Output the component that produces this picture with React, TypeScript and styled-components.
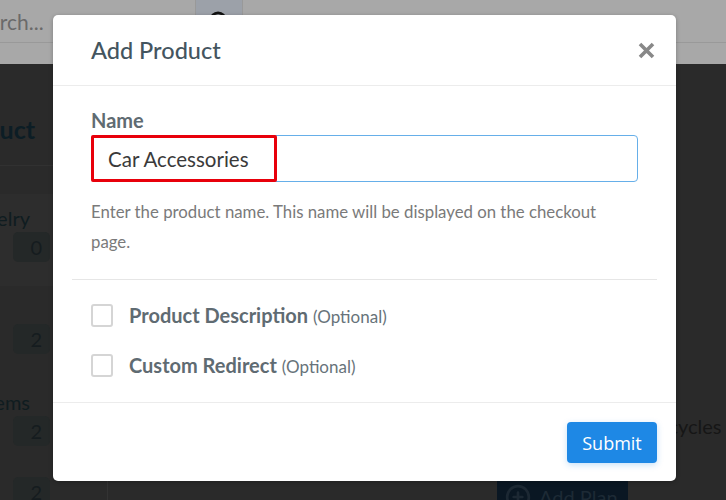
import { Search, PlusCircle } from 'lucide-react';
import styled, { createGlobalStyle } from 'styled-components';

const GlobalStyle = createGlobalStyle`
  html, body {
    margin: 0;
    padding: 0;
    background: #2a2a2a;
    font-family: Lato, "Open Sans", sans-serif;
  }
`;

export default function App() {
  return (
    <>
      <GlobalStyle />
      <Page>
        <Header>
          <SearchRow>
            <SearchField>
              <SearchText>Search...</SearchText>
            </SearchField>
            <SearchButton>
              <Search size={22} strokeWidth={3} color="#111" />
            </SearchButton>
          </SearchRow>
          <SubBar />
        </Header>

        <Main>
          <Sidebar>
            <SideTitle>Product</SideTitle>
            <SideGroup $active>
              <SideName>Jewelry</SideName>
              <Badge>0</Badge>
            </SideGroup>
            <SideGroup>
              <SideName />
              <Badge>2</Badge>
            </SideGroup>
            <SideGroup>
              <SideName>Items</SideName>
              <Badge>2</Badge>
            </SideGroup>
            <SideGroup $compact>
              <Badge>2</Badge>
            </SideGroup>
          </Sidebar>
          <Content>
            <div />
            <PlanColumn>
              <CycleLabel>Billing cycles</CycleLabel>
              <AddPlan>
                <PlusCircle size={26} strokeWidth={2.5} color="#1c2833" />
                Add Plan
              </AddPlan>
            </PlanColumn>
          </Content>
        </Main>

        <Overlay>
          <Modal>
            <ModalHeader>
              <ModalTitle>Add Product</ModalTitle>
              <CloseButton aria-label="Close">
                <svg width="17" height="17" viewBox="0 0 17 17">
                  <path
                    d="M2 2 L15 15 M15 2 L2 15"
                    stroke="#888"
                    strokeWidth="3.6"
                    strokeLinecap="butt"
                  />
                </svg>
              </CloseButton>
            </ModalHeader>

            <ModalBody>
              <Field>
                <Label>Name</Label>
                <InputWrap>
                  <NameInput defaultValue="Car Accessories" />
                  <Highlight />
                </InputWrap>
                <Help>
                  Enter the product name. This name will be displayed on the checkout page.
                </Help>
              </Field>
              <Divider />
              <Options>
                <Option>
                  <Box />
                  <OptionName>Product Description</OptionName>
                  <Optional>(Optional)</Optional>
                </Option>
                <Option>
                  <Box />
                  <OptionName>Custom Redirect</OptionName>
                  <Optional>(Optional)</Optional>
                </Option>
              </Options>
            </ModalBody>

            <ModalFooter>
              <SubmitButton>Submit</SubmitButton>
            </ModalFooter>
          </Modal>
        </Overlay>
      </Page>
    </>
  );
}

const Page = styled.div`
  position: relative;
  width: 726px;
  height: 500px;
  overflow: hidden;
  background: #2a2a2a;
  display: flex;
  flex-direction: column;
`;

const Header = styled.div`
  display: flex;
  flex-direction: column;
  background: #a8a8a8;
`;

const SearchRow = styled.div`
  display: flex;
  height: 42px;
  border-bottom: 1px solid #999;
`;

const SearchField = styled.div`
  width: 195px;
  overflow: hidden;
  display: flex;
  align-items: center;
  border-right: 1px solid #999;
`;

const SearchText = styled.span`
  margin-left: -33px;
  font-size: 21px;
  color: #6a6a6a;
  white-space: nowrap;
`;

const SearchButton = styled.div`
  width: 47px;
  background: #9ca1a9;
  border-right: 1px solid #999;
  display: flex;
  justify-content: center;
  padding-top: 10px;
  box-sizing: border-box;
`;

const SubBar = styled.div`
  height: 21px;
`;

const Main = styled.div`
  flex: 1;
  display: flex;
`;

const Sidebar = styled.div`
  width: 107px;
  border-right: 1px solid #333;
  display: flex;
  flex-direction: column;
  overflow: hidden;
`;

const SideTitle = styled.div`
  height: 102px;
  box-sizing: border-box;
  display: flex;
  align-items: flex-end;
  justify-content: flex-end;
  padding: 0 72px 21px 0;
  font-size: 25px;
  line-height: 30px;
  font-weight: 700;
  color: #0c1d25;
  white-space: nowrap;
  border-bottom: 1px solid #313131;
  margin-bottom: 28px;
`;

const SideGroup = styled.div<{ $active?: boolean; $compact?: boolean }>`
  display: flex;
  flex-direction: column;
  align-items: flex-start;
  padding: ${(p) => (p.$compact ? '7px' : '10px')} 0 24px 13px;
  box-sizing: border-box;
  background: ${(p) => (p.$active ? '#2d2d2d' : 'transparent')};
`;

const SideName = styled.div`
  height: 28px;
  line-height: 28px;
  margin-left: -53px;
  width: 70px;
  font-size: 20px;
  color: #0f1c20;
  white-space: nowrap;
  display: flex;
  justify-content: flex-end;
`;

const Badge = styled.div`
  width: 37px;
  height: 30px;
  border-radius: 5px;
  background: #242828;
  color: #151c1f;
  font-size: 20px;
  display: flex;
  align-items: center;
  justify-content: flex-end;
  padding-right: 8px;
  box-sizing: border-box;
`;

const Content = styled.div`
  flex: 1;
  display: grid;
  grid-template-columns: 1fr 229px;
`;

const PlanColumn = styled.div`
  display: flex;
  flex-direction: column;
  padding-top: 350px;
`;

const CycleLabel = styled.div`
  padding-left: 113px;
  font-size: 20px;
  color: #161616;
  white-space: nowrap;
  height: 55px;
`;

const AddPlan = styled.div`
  width: 131px;
  height: 40px;
  margin-top: 8px;
  background: #0a1723;
  border-radius: 3px;
  display: flex;
  align-items: center;
  gap: 8px;
  padding-left: 8px;
  box-sizing: border-box;
  color: #1d2a35;
  font-size: 20px;
`;

const Overlay = styled.div`
  position: absolute;
  inset: 0;
  display: flex;
  align-items: flex-start;
  padding: 15px 0 0 53px;
`;

const Modal = styled.div`
  width: 623px;
  height: 466px;
  background: #fff;
  border-radius: 5px;
  display: flex;
  flex-direction: column;
  box-shadow: 0 1px 4px rgba(0, 0, 0, 0.25);
`;

const ModalHeader = styled.div`
  height: 71px;
  box-sizing: border-box;
  display: flex;
  align-items: center;
  justify-content: space-between;
  padding: 0 21px 0 38px;
  border-bottom: 1px solid #ececec;
`;

const ModalTitle = styled.h2`
  margin: 0;
  font-size: 23.5px;
  font-weight: 500;
  color: #44555f;
`;

const CloseButton = styled.button`
  border: 0;
  background: none;
  padding: 0;
  display: flex;
`;

const ModalBody = styled.div`
  flex: 1;
  padding: 0 19px;
  display: flex;
  flex-direction: column;
`;

const Field = styled.div`
  padding: 21px 19px 0;
  display: flex;
  flex-direction: column;
`;

const Label = styled.label`
  font-size: 20px;
  font-weight: 700;
  color: #5f6b72;
  line-height: 27px;
`;

const InputWrap = styled.div`
  position: relative;
  margin-top: 1px;
`;

const NameInput = styled.input`
  width: 100%;
  height: 47px;
  box-sizing: border-box;
  border: 1px solid #66afe9;
  border-radius: 4px;
  padding: 0 16px;
  font-family: Lato, sans-serif;
  font-size: 20.5px;
  color: #3a3a3a;
  outline: none;
`;

const Highlight = styled.div`
  position: absolute;
  left: 0;
  top: 0;
  width: 186px;
  height: 47px;
  box-sizing: border-box;
  border: 3px solid #e8000b;
  border-radius: 2px;
  pointer-events: none;
`;

const Help = styled.p`
  margin: 15px 0 0;
  font-size: 16.8px;
  line-height: 30px;
  color: #7a7a7a;
  padding-right: 30px;
`;

const Divider = styled.hr`
  margin: 22px 0 0;
  border: 0;
  border-top: 1px solid #e6e6e6;
`;

const Options = styled.div`
  padding: 10px 19px 0;
  display: flex;
  flex-direction: column;
`;

const Option = styled.label`
  height: 50px;
  display: flex;
  align-items: center;
`;

const Box = styled.span`
  width: 22px;
  height: 23px;
  box-sizing: border-box;
  border: 2px solid #d5d5d5;
  border-radius: 3px;
  margin-right: 16px;
`;

const OptionName = styled.span`
  font-size: 20px;
  font-weight: 700;
  color: #5f6b72;
  margin-right: 5px;
`;

const Optional = styled.span`
  font-size: 17px;
  color: #67737a;
  margin-top: 3px;
`;

const ModalFooter = styled.div`
  height: 79px;
  box-sizing: border-box;
  border-top: 1px solid #ececec;
  display: flex;
  justify-content: flex-end;
  padding: 19px 19px 0;
  align-items: flex-start;
`;

const SubmitButton = styled.button`
  width: 90px;
  height: 41px;
  border: 0;
  border-radius: 4px;
  background: #1e88e5;
  color: #fff;
  font-family: "Open Sans", "Noto Sans", sans-serif;
  font-size: 18px;
  box-shadow: 0 2px 6px rgba(30, 136, 229, 0.25);
`;
